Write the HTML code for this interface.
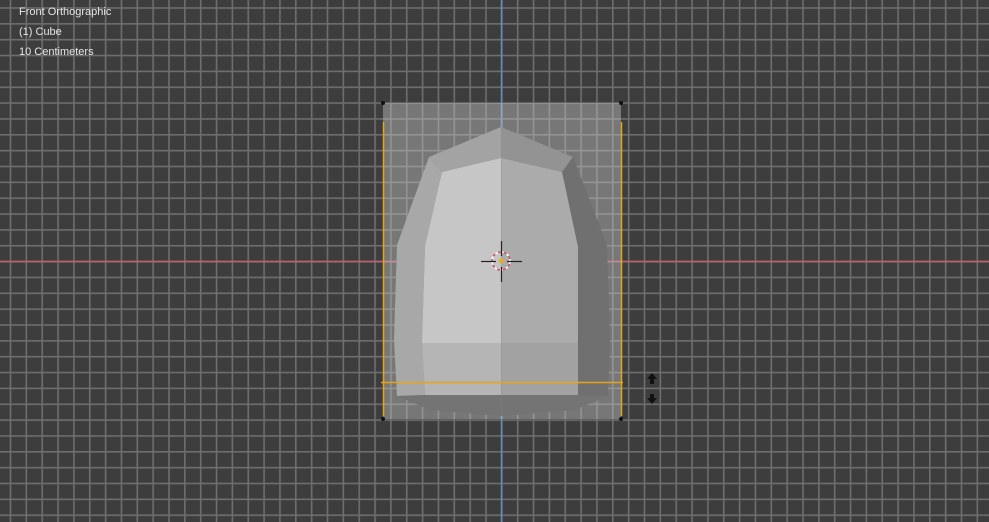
<!DOCTYPE html>
<html><head><meta charset="utf-8"><style>
html,body{margin:0;padding:0}
body{width:989px;height:522px;overflow:hidden;position:relative;background-color:#3d3d3d;font-family:"Liberation Sans",sans-serif}
.t{position:absolute;left:19px;color:#e6e6e6;font-size:11px;line-height:12px;z-index:2}
svg{position:absolute;left:0;top:0}
</style></head><body>
<svg width="989" height="522">
<defs>
<pattern id="g" patternUnits="userSpaceOnUse" width="15.85" height="15.85" x="9.7" y="7.2">
<rect x="0" y="0" width="1.6" height="15.85" fill="#6e6e6e"/>
<rect x="0" y="0" width="15.85" height="1.6" fill="#6e6e6e"/>
</pattern>
</defs>
<rect width="989" height="522" fill="url(#g)"/>
<line x1="0" y1="261.5" x2="989" y2="261.5" stroke="#c06070" stroke-width="1.5"/>
<line x1="501.5" y1="0" x2="501.5" y2="522" stroke="#5f8fc0" stroke-width="1.5"/>
<rect x="383" y="103" width="238" height="316" fill="rgba(200,200,200,0.42)"/>
<polygon points="501,127 429,157 442,172 501,158" fill="#a3a3a3"/>
<polygon points="501,127 573,157 562,172 501,158" fill="#939393"/>
<polygon points="429,157 397,245 394,340 397,396 425,395 422,342 425,246 442,172" fill="#a8a8a8"/>
<polygon points="573,157 607,245 610,340 608,396 578,395 578,342 578,247 562,172" fill="#707070"/>
<polygon points="442,172 501,158 501,343 422,343 425,246" fill="#c6c6c6"/>
<polygon points="562,172 501,158 501,343 578,343 578,247" fill="#ababab"/>
<polygon points="422,343 501,343 501,395 425,395" fill="#b5b5b5"/>
<polygon points="501,343 578,343 578,395 501,395" fill="#a2a2a2"/>
<polygon points="397,396 425,395 501,395 578,395 608,396 575,410 501,416 430,410" fill="#747474"/>
<line x1="501.5" y1="127" x2="501.5" y2="416" stroke="#8a8a8a" stroke-width="0.6" opacity="0.5"/>
<g stroke="#e3a51e" stroke-width="1.5">
<line x1="383.5" y1="122" x2="383.5" y2="416"/>
<line x1="621.5" y1="122" x2="621.5" y2="416"/>
<line x1="381" y1="382.5" x2="623" y2="382.5"/>
</g>
<g fill="#111"><circle cx="383" cy="103" r="2"/><circle cx="621" cy="103" r="2"/><circle cx="383" cy="419" r="2"/><circle cx="621" cy="419" r="2"/></g>
<path d="M652,373 L657,379 L654,379 L654,384 L650,384 L650,379 L647,379 Z" fill="#111"/>
<path d="M652,404 L657,398 L654,398 L654,394 L650,394 L650,398 L647,398 Z" fill="#111"/>
<circle cx="501" cy="261" r="9" fill="none" stroke="#fff" stroke-width="1.5" stroke-dasharray="3 3"/>
<circle cx="501" cy="261" r="9" fill="none" stroke="#d05060" stroke-width="1.5" stroke-dasharray="3 3" stroke-dashoffset="3"/>
<g stroke="#222" stroke-width="1.2"><line x1="481" y1="261.5" x2="496" y2="261.5"/><line x1="507" y1="261.5" x2="522" y2="261.5"/><line x1="501.5" y1="241" x2="501.5" y2="256"/><line x1="501.5" y1="267" x2="501.5" y2="282"/></g>
<circle cx="501" cy="261" r="2.5" fill="#e8b020"/>
</svg>
<div class="t" style="top:6px">Front Orthographic</div>
<div class="t" style="top:26px">(1) Cube</div>
<div class="t" style="top:46px">10 Centimeters</div>
</body></html>
